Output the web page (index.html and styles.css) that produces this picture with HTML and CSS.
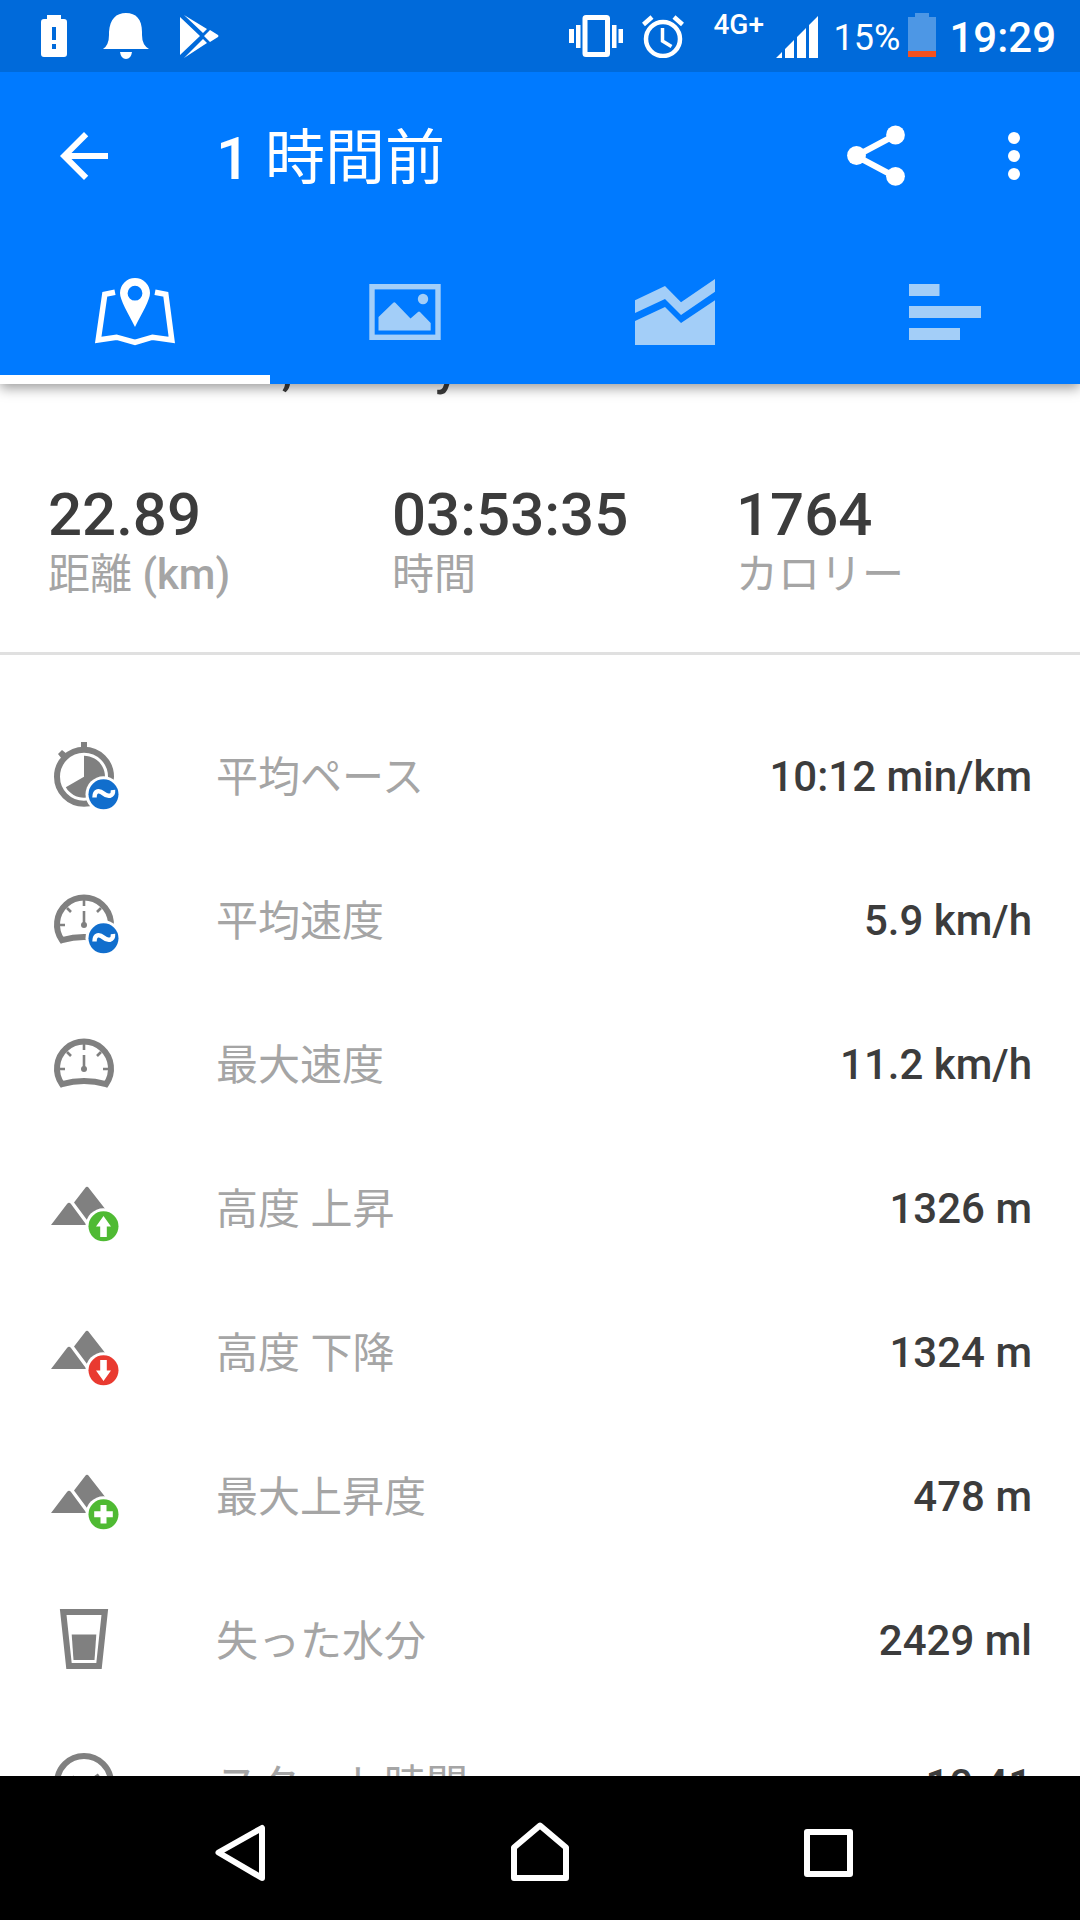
FILE: index.html
```html
<!DOCTYPE html>
<html lang="ja">
<head>
    <meta charset="UTF-8">
    <meta name="viewport" content="width=device-width, initial-scale=1.0">
    <title>1 時間前</title>
    <link rel="stylesheet" href="styles.css">
</head>
<body>

    <div class="screen">
        <div class="status-bar">
            <div class="status-left">
                <svg width="26" height="42" viewBox="0 0 26 42"><path fill="#fff" fill-rule="evenodd" d="M6 0h14v4h3q3 0 3 3v32q0 3-3 3H3q-3 0-3-3V7q0-3 3-3h3zM11 12v13h4V12zM11 29v5h4v-5z"/></svg>
                <svg width="48" height="46" viewBox="0 0 48 46"><path fill="#fff" d="M1 36Q7 32 7 22V19C8 6 14 0 24 0s16 6 16 19v3q0 10 7 14zM18 39h12q-1 7-6 7t-6-7z"/></svg>
                <svg class="play" width="39" height="43" viewBox="0 0 39 43"><path fill="#fff" d="M0 2 20 21 0 40zM4 0 27 14 23 18zM30 15 38 20q1 1 0 2l-8 5-6-6zM23 24l4 4L4 43z"/></svg>
            </div>
            <div class="status-right">
                <svg class="vibrate" width="54" height="42" viewBox="0 0 54 42"><rect x="16" y="2.500" width="22.500" height="37" rx="1" fill="none" stroke="#fff" stroke-width="5"/><path fill="#fff" d="M0 14h5v14H0zM7 10h4.500v23H7zM43 10h4.500v23H43zM49.500 14h4.500v14h-4.500z"/></svg>
                <svg class="alarm" width="42" height="43" viewBox="0 0 42 43"><g fill="none" stroke="#fff"><circle cx="21" cy="24" r="17" stroke-width="4.500"/><path stroke-width="4.500" d="M1.500 9.500 10 2M32 2l8.500 7.500"/><path stroke-width="3.500" d="M20.500 13v13l9 5.500"/></g></svg>
                <span class="network">4G+</span>
                <svg class="signal" width="42" height="42" viewBox="0 0 42 42"><path fill="#fff" d="M0 42 6 36v6zM9 33l9-9v18H9zM21 21l9-9v30h-9zM33 9l9-9v42h-9z"/></svg>
                <span class="percent">15%</span>
                <svg class="battery" width="28" height="44" viewBox="0 0 28 44"><path fill="#4d97e5" d="M7 0h14v4h7v34H0V4h7z"/><path fill="#f4511e" d="M0 38h28v6H0z"/></svg>
                <span class="clock">19:29</span>
            </div>
        </div>

        <div class="app-header">
            <div class="toolbar">
                <svg width="72" height="72" viewBox="0 0 24 24"><path fill="#fff" d="M20 11H7.830l5.590-5.590L12 4l-8 8 8 8 1.410-1.410L7.830 13H20v-2z"/></svg>
                <h1><b>1</b> 時間前</h1>
                <svg class="share" width="72" height="72" viewBox="0 0 72 72"><path fill="none" stroke="#fff" stroke-width="6" d="M55.500 15 16 36l39.500 21"/><g fill="#fff"><circle cx="55.500" cy="15" r="9.400"/><circle cx="16.500" cy="35.500" r="9.400"/><circle cx="55.500" cy="56.300" r="9.400"/></g></svg>
                <svg class="more" width="12" height="48" viewBox="0 0 12 48"><g fill="#fff"><circle cx="6" cy="6" r="6"/><circle cx="6" cy="24" r="6"/><circle cx="6" cy="42" r="6"/></g></svg>
            </div>
            <div class="tabs">
                <div class="tab active">
                    <svg width="80" height="68" viewBox="0 0 80 68"><path fill="none" stroke="#fff" stroke-width="5.500" d="M20 14.200 9.800 16.300 3.200 62 21.500 59.200 40 64.500 57.500 59.200 76.800 62 70.800 16.300 60 14.200"/><path fill="#fff" fill-rule="evenodd" d="M40 0a15 15 0 0 1 15 15c0 7-8 20-15 34C33 35 25 22 25 15A15 15 0 0 1 40 0zm0 7.800a7.400 7.400 0 1 0 0 14.800 7.400 7.400 0 0 0 0-14.800z"/></svg>
                </div>
                <div class="tab">
                    <svg width="72" height="56" viewBox="0 0 72 56"><rect x="3" y="2.700" width="66" height="50.600" fill="none" stroke="#a3cef8" stroke-width="5.400"/><g fill="#a3cef8"><circle cx="54" cy="15" r="5.200"/><path d="M9.500 33 24 19q1.300-1.300 2.600 0L41.500 34.500 49 28q1-1 2 0L61.700 39v7.500H9.500z"/></g></svg>
                </div>
                <div class="tab">
                    <svg width="80" height="66" viewBox="0 0 80 66"><path fill="#a3cef8" d="M0 21.300 30 7 46 23.300 80 0v12.700L46 36 30 20 0 34zM0 42 30 28 46 44 80 21.300V66H0z"/></svg>
                </div>
                <div class="tab">
                    <svg width="72" height="56" viewBox="0 0 72 56"><path fill="#a3cef8" d="M0 0h30.500v12H0zM0 22h72v12H0zM0 44h51v12H0z"/></svg>
                </div>
            </div>
        </div>

        <div class="content">
            <h2>October 28, Sunday</h2>
            <div class="summary">
                <div class="stat"><b>22.89</b><span>距離 <i>(km)</i></span></div>
                <div class="stat"><b>03:53:35</b><span>時間</span></div>
                <div class="stat"><b>1764</b><span>カロリー</span></div>
            </div>
            <div class="details" id="details"></div>
        </div>

        <div class="nav-bar">
            <svg width="96" height="96" viewBox="0 0 96 96"><path d="M14.500 52.500 58 28v50z"/></svg>
            <svg width="96" height="96" viewBox="0 0 96 96"><path d="M48 25.500 74 47.500V78H22V47.500z"/></svg>
            <svg width="96" height="96" viewBox="0 0 96 96"><path d="M27 32h43v42H27z"/></svg>
        </div>
    </div>

    <script>
        const gauge = `<g fill="none" stroke="#808080"><path stroke-width="6" d="M14 56.200A27 27 0 1 1 58 56.200Q36 49.800 14 56.200z"/><path stroke-width="2.600" d="M36 16v6M12 41h5M55 41h5M19 24l4 4M53 24l-4 4M36 27v14"/></g><circle cx="36" cy="41" r="3" fill="#808080"/>`;
        const mountain = `<path fill="#808080" d="M37 16.200q2-2.800 4 0L58 38 52 50 39 48 26 30.500zM3 53 19 32q2-2.500 4 0l15.500 21z"/>`;
        const clock = `<circle cx="36" cy="35" r="27" fill="none" stroke="#808080" stroke-width="6"/><path fill="none" stroke="#808080" stroke-width="4" d="M24 29l12 9 15-11"/>`;

        // round badge in the lower right corner of an icon
        function badge(color, mark) {
            return `<circle cx="55.500" cy="54.300" r="18" fill="#fff"/><circle cx="55.500" cy="54.300" r="15" fill="${color}"/>${mark}`;
        }

        const average = badge("#116ecd", `<path fill="none" stroke="#fff" stroke-width="4.500" d="M46.500 57.500C46.500 50 51.500 50 55.500 53.500S65.500 57 65 50"/>`);
        const up = badge("#4fba33", `<path fill="#fff" d="M55.500 44 63 54.500h-4.200V65h-6.600V54.500H48z"/>`);
        const down = badge("#e93a30", `<path fill="#fff" d="M55.500 65 63 54.500h-4.200V44h-6.600v10.500H48z"/>`);
        const plus = badge("#4fba33", `<path fill="#fff" d="M52.500 45h6v6.300h6.300v6h-6.300v6.300h-6v-6.300h-6.300v-6h6.300z"/>`);

        const rows = [
            { name: "平均ペース", value: "10:12 min/km", icon: `<circle cx="36" cy="36.700" r="27" fill="none" stroke="#808080" stroke-width="6"/><path fill="#808080" d="M33 2h6v7h-6zM10 14l4-4 5 4-5 5zM36 36.700v-21a21 21 0 1 1-18.200 31.500z"/>` + average },
            { name: "平均速度", value: "5.9 km/h", icon: gauge + average },
            { name: "最大速度", value: "11.2 km/h", icon: gauge },
            { name: "高度 上昇", value: "1326 m", icon: mountain + up },
            { name: "高度 下降", value: "1324 m", icon: mountain + down },
            { name: "最大上昇度", value: "478 m", icon: mountain + plus },
            { name: "失った水分", value: "2429 ml", icon: `<path fill="none" stroke="#808080" stroke-width="6" stroke-linejoin="miter" d="M15.200 8h41.600L51 62H21z"/><path fill="#808080" d="M23.700 30.500h24.600L46.500 56h-21z"/>` },
            { name: "スタート時間", value: "10:41", icon: clock }
        ];

        document.getElementById("details").innerHTML = rows.map(row => `
            <div class="row">
                <svg width="72" height="72" viewBox="0 0 72 72">${row.icon}</svg>
                <span class="name">${row.name}</span>
                <span class="value">${row.value}</span>
            </div>
        `).join("");
    </script>

</body>
</html>
```
FILE: styles.css
```css
* {
    box-sizing: border-box;
}
body {
    margin: 0;
    font-family: Roboto, "Noto Sans CJK JP", sans-serif;
    background: white;
}
svg {
    display: block;
    flex: none;
}
.screen {
    display: flex;
    flex-direction: column;
    width: 1080px;
    height: 1920px;
    overflow: hidden;
}
.status-bar {
    display: flex;
    flex: none;
    justify-content: space-between;
    height: 72px;
    padding: 0 24px 0 41px;
    background: #006ada;
    color: white;
    z-index: 2;
}
.status-left, .status-right {
    display: flex;
    align-items: center;
}
.status-left {
    gap: 35px;
}
.play {
    margin-left: -5px;
}
.vibrate {
    margin-right: -1px;
}
.alarm {
    margin-left: 20px;
}
.network {
    margin: 0 0 23px 29px;
    width: 51px;
    font-size: 28px;
    font-weight: 500;
    line-height: 32px;
    white-space: nowrap;
}
.signal {
    margin-left: 12px;
    margin-top: 2px;
}
.percent {
    margin-left: 15px;
    margin-top: 3px;
    width: 67px;
    font-size: 36px;
}
.battery {
    margin-left: 8px;
    margin-top: -2px;
}
.clock {
    margin-left: 13px;
    margin-top: 2px;
    font-size: 42px;
    font-weight: 500;
}
.app-header {
    flex: none;
    height: 312px;
    background: #007aff;
    color: white;
    box-shadow: 0 4px 12px rgba(0, 0, 0, 0.4);
    z-index: 1;
}
.toolbar {
    display: flex;
    align-items: center;
    height: 168px;
    padding: 0 60px 0 48px;
}
h1 {
    flex: 1;
    margin: 6px 0 0 96px;
    font-size: 60px;
    font-weight: 400;
    line-height: 72px;
}
h1 b {
    font-weight: 500;
}
.more {
    margin-left: 96px;
}
.tabs {
    display: flex;
    height: 144px;
}
.tab {
    display: flex;
    flex: 1;
    align-items: center;
    justify-content: center;
}
.active {
    box-shadow: inset 0 -9px white;
}
.content {
    flex: 1;
    min-height: 0;
    overflow: hidden;
    color: #3c3c3c;
}
h2 {
    margin: -44px 48px 0;
    font-size: 49px;
    font-weight: 500;
    line-height: 56px;
    word-spacing: -8px;
}
.summary {
    display: flex;
    height: 259px;
    padding: 84px 0 0 48px;
    border-bottom: 3px solid #e0e0e0;
}
.stat {
    flex: 1;
    display: flex;
    flex-direction: column;
}
.stat b {
    font-size: 60px;
    font-weight: 500;
    line-height: 70px;
}
.stat span {
    font-size: 42px;
    line-height: 50px;
    color: #a5a5a5;
}
.stat i {
    font-style: normal;
    font-weight: 500;
}
.details {
    padding-top: 49px;
}
.row {
    display: flex;
    align-items: center;
    height: 144px;
    padding: 0 48px;
    font-size: 42px;
}
.name {
    flex: 1;
    margin-left: 96px;
    margin-bottom: 5px;
    color: #a5a5a5;
}
.value {
    font-weight: 500;
}
.nav-bar {
    display: flex;
    flex: none;
    align-items: center;
    justify-content: center;
    gap: 192px;
    height: 144px;
    background: black;
}
.nav-bar path {
    fill: none;
    stroke: white;
    stroke-width: 6;
    stroke-linejoin: round;
}
```
